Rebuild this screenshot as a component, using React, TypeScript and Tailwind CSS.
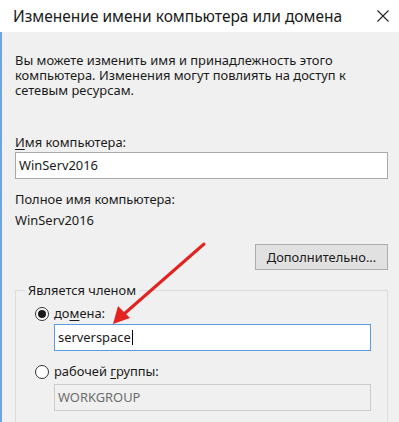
import React from "react";

function Radio({ checked }: { checked: boolean }) {
  return (
    <span className="w-[14px] h-[14px] rounded-full border border-[#333333] bg-white flex items-center justify-center shrink-0">
      {checked && <span className="w-[8px] h-[8px] rounded-full bg-[#1a1a1a]" />}
    </span>
  );
}

export default function App() {
  return (
    <div
      className="relative w-[399px] h-[422px] overflow-hidden bg-[#f0f0f0] text-[#1a1a1a] text-[12.9px] leading-[15px]"
      style={{ fontFamily: '"Noto Sans", "Open Sans", Arial, sans-serif' }}
    >
      {/* title bar */}
      <div className="h-[32px] bg-white flex items-center justify-between pl-[13px] pr-[9px]">
        <span className="text-[15.5px] text-[#1a1a1a]">Изменение имени компьютера или домена</span>
        <svg width="12" height="12" viewBox="0 0 12 12" className="mr-[1px]">
          <path d="M0.5 0.5 L11.5 11.5 M11.5 0.5 L0.5 11.5" stroke="#222" strokeWidth="1.1" fill="none" />
        </svg>
      </div>

      {/* body */}
      <div className="h-[390px] border-l-2 border-[#6fa5de] pl-[13px] pr-[11px] pt-[21px]">
        <p className="w-[345px]">
          Вы можете изменить имя и принадлежность этого компьютера. Изменения могут повлиять на доступ к сетевым ресурсам.
        </p>

        <div className="mt-[37px]">
          <span className="underline underline-offset-2">И</span>мя компьютера:
        </div>
        <div className="mt-[2px] h-[27px] bg-white border border-[#a9a9a9] flex items-center px-[3px]">
          WinServ2016
        </div>

        <div className="mt-[13px]">Полное имя компьютера:</div>
        <div className="mt-[6px]">WinServ2016</div>

        <div className="mt-[16px] flex justify-end">
          <button className="w-[133px] h-[26px] bg-[#e1e1e1] border border-[#adadad] flex items-center justify-center text-[12.9px]">
            <span>
              <span className="underline underline-offset-2">Д</span>ополнительно...
            </span>
          </button>
        </div>

        <fieldset className="mt-[13px] border border-[#dcdcdc] pb-[20px]">
          <legend className="ml-[9px] px-[3px]">Является членом</legend>
          <div className="mt-[8px] ml-[19px] flex items-center gap-[5px]">
            <Radio checked />
            <span>
              до<span className="underline underline-offset-2">м</span>ена:
            </span>
          </div>
          <div className="mt-[3px] ml-[38px] mr-[16px] h-[27px] bg-white border border-[#569de5] flex items-center px-[3px]">
            serverspace<span className="inline-block w-[1px] h-[15px] bg-black ml-[1px]" />
          </div>
          <div className="mt-[13px] ml-[19px] flex items-center gap-[5px]">
            <Radio checked={false} />
            <span>
              рабочей <span className="underline underline-offset-2">г</span>руппы:
            </span>
          </div>
          <div className="mt-[5px] ml-[38px] mr-[16px] h-[27px] bg-[#f0f0f0] border border-[#cccccc] flex items-center px-[3px] text-[#6d6d6d]">
            WORKGROUP
          </div>
        </fieldset>
      </div>

      {/* red arrow annotation */}
      <svg className="absolute left-0 top-0 pointer-events-none" width="399" height="422">
        <line x1="204" y1="244" x2="124" y2="314" stroke="#e2231f" strokeWidth="3" strokeLinecap="round" />
        <polygon points="113,324 118,306 130,318" fill="#e2231f" />
      </svg>
    </div>
  );
}
